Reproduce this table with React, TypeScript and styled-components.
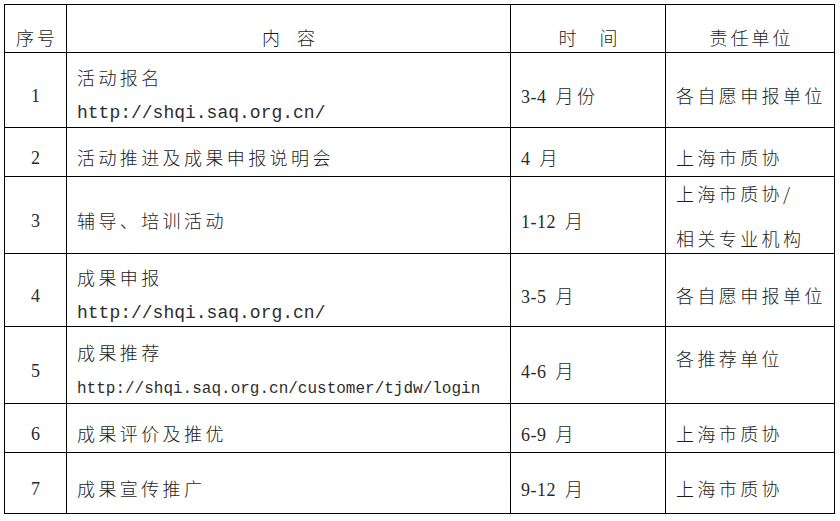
import React from 'react';
import styled, { createGlobalStyle } from 'styled-components';

type Face = 'cjk' | 'mono' | 'monoSmall';

interface Line {
  text: string;
  face?: Face;
}

interface Block {
  lines: Line[];
  gap?: number;
  shift?: number;
}

interface Period {
  from: string;
  unit: string;
}

interface Row {
  no: string;
  height: number;
  content: Block;
  time: Period;
  unit: Block;
}

// 表头高度 + 各行高度（像素，含下边线）
const HEAD_HEIGHT = 48;

const rows: Row[] = [
  {
    no: '1',
    height: 75,
    content: {
      lines: [{ text: '活动报名' }, { text: 'http://shqi.saq.org.cn/', face: 'mono' }],
      gap: 16,
    },
    time: { from: '3-4', unit: '月份' },
    unit: { lines: [{ text: '各自愿申报单位' }] },
  },
  {
    no: '2',
    height: 49,
    content: { lines: [{ text: '活动推进及成果申报说明会' }] },
    time: { from: '4', unit: '月' },
    unit: { lines: [{ text: '上海市质协' }] },
  },
  {
    no: '3',
    height: 77,
    content: { lines: [{ text: '辅导、培训活动' }] },
    time: { from: '1-12', unit: '月' },
    unit: { lines: [{ text: '上海市质协/' }, { text: '相关专业机构' }], gap: 25, shift: 0 },
  },
  {
    no: '4',
    height: 73,
    content: {
      lines: [{ text: '成果申报' }, { text: 'http://shqi.saq.org.cn/', face: 'mono' }],
      gap: 16,
    },
    time: { from: '3-5', unit: '月' },
    unit: { lines: [{ text: '各自愿申报单位' }] },
  },
  {
    no: '5',
    height: 77,
    content: {
      lines: [
        { text: '成果推荐' },
        { text: 'http://shqi.saq.org.cn/customer/tjdw/login', face: 'monoSmall' },
      ],
      gap: 17,
    },
    time: { from: '4-6', unit: '月' },
    unit: { lines: [{ text: '各推荐单位' }], shift: -7 },
  },
  {
    no: '6',
    height: 49,
    content: { lines: [{ text: '成果评价及推优' }] },
    time: { from: '6-9', unit: '月' },
    unit: { lines: [{ text: '上海市质协' }] },
  },
  {
    no: '7',
    height: 61,
    content: { lines: [{ text: '成果宣传推广' }] },
    time: { from: '9-12', unit: '月' },
    unit: { lines: [{ text: '上海市质协' }] },
  },
];

const DEFAULT_SHIFT = 5;

const App = () => {
  return (
    <Page>
      <GlobalStyle />
      <Schedule $rows={[HEAD_HEIGHT, ...rows.map((r) => r.height)]}>
        <Cell $center $shift={8}>
          <HeadText>序号</HeadText>
        </Cell>
        <Cell $center $shift={8}>
          <HeadText $wordGap={7}>内 容</HeadText>
        </Cell>
        <Cell $center $shift={8}>
          <HeadText $wordGap={13}>时 间</HeadText>
        </Cell>
        <Cell $center $shift={8}>
          <HeadText>责任单位</HeadText>
        </Cell>

        {rows.map((row) => (
          <React.Fragment key={row.no}>
            <Cell $center $shift={DEFAULT_SHIFT + 1}>
              <Number>{row.no}</Number>
            </Cell>
            <Cell $gap={row.content.gap} $shift={row.content.shift ?? DEFAULT_SHIFT}>
              {row.content.lines.map((line, i) => (
                <Text key={i} $face={line.face || 'cjk'}>
                  {line.text}
                </Text>
              ))}
            </Cell>
            <Cell $shift={DEFAULT_SHIFT + 1}>
              <TimeText>
                {row.time.from} <Han>{row.time.unit}</Han>
              </TimeText>
            </Cell>
            <Cell $gap={row.unit.gap} $shift={row.unit.shift ?? DEFAULT_SHIFT}>
              {row.unit.lines.map((line, i) => (
                <Text key={i} $face={line.face || 'cjk'}>
                  {line.text}
                </Text>
              ))}
            </Cell>
          </React.Fragment>
        ))}
      </Schedule>
    </Page>
  );
};

export default App;

const GlobalStyle = createGlobalStyle`
  html, body {
    margin: 0;
    padding: 0;
    background: #fff;
  }
  body {
    font-family: "Noto Sans CJK SC", "Liberation Sans", sans-serif;
    color: #1c1c1c;
  }
`;

const Page = styled.div`
  width: 840px;
  height: 521px;
  box-sizing: border-box;
  padding: 4px;
  background: #fff;
`;

const Schedule = styled.div<{ $rows: number[] }>`
  display: grid;
  grid-template-columns: 62px 444px 155px 169px;
  grid-template-rows: ${({ $rows }) => $rows.map((h) => `${h}px`).join(' ')};
  width: 831px;
  box-sizing: border-box;
  border-top: 1px solid #000;
  border-left: 1px solid #000;
`;

const Cell = styled.div<{ $center?: boolean; $shift: number; $gap?: number }>`
  box-sizing: border-box;
  border-right: 1px solid #000;
  border-bottom: 1px solid #000;
  display: flex;
  flex-direction: column;
  justify-content: center;
  align-items: ${({ $center }) => ($center ? 'center' : 'flex-start')};
  gap: ${({ $gap }) => $gap || 0}px;
  padding-top: ${({ $shift }) => Math.max(0, $shift * 2)}px;
  padding-bottom: ${({ $shift }) => Math.max(0, -$shift * 2)}px;
  padding-left: ${({ $center }) => ($center ? 0 : 10)}px;
  overflow: visible;
`;

const HeadText = styled.div<{ $wordGap?: number }>`
  font-family: "Noto Sans CJK SC", sans-serif;
  font-size: 18px;
  font-weight: 300;
  line-height: 20px;
  letter-spacing: 3px;
  word-spacing: ${({ $wordGap }) => $wordGap || 0}px;
  white-space: pre;
  padding-left: 3px;
`;

const Number = styled.div`
  font-family: "Liberation Serif", "Times New Roman", serif;
  font-size: 18px;
  line-height: 20px;
  color: #2a2a2a;
`;

const faces: Record<Face, string> = {
  cjk: `
    font-family: "Noto Sans CJK SC", sans-serif;
    font-size: 18px;
    font-weight: 300;
    letter-spacing: 3.4px;
  `,
  mono: `
    font-family: "Liberation Mono", "DejaVu Sans Mono", monospace;
    font-size: 18px;
    letter-spacing: 0;
    color: #2e2e2e;
  `,
  monoSmall: `
    font-family: "Liberation Mono", "DejaVu Sans Mono", monospace;
    font-size: 16px;
    letter-spacing: 0;
    color: #2e2e2e;
  `,
};

const Text = styled.div<{ $face: Face }>`
  ${({ $face }) => faces[$face]}
  line-height: 20px;
  white-space: pre;
`;

const TimeText = styled.div`
  font-family: "Liberation Serif", "Noto Sans CJK SC", serif;
  font-size: 18px;
  line-height: 20px;
  letter-spacing: 0.5px;
  white-space: pre;
  color: #2a2a2a;
`;

const Han = styled.span`
  font-family: "Noto Sans CJK SC", sans-serif;
  font-weight: 300;
  letter-spacing: 3.4px;
  margin-left: 4px;
  color: #1c1c1c;
`;
